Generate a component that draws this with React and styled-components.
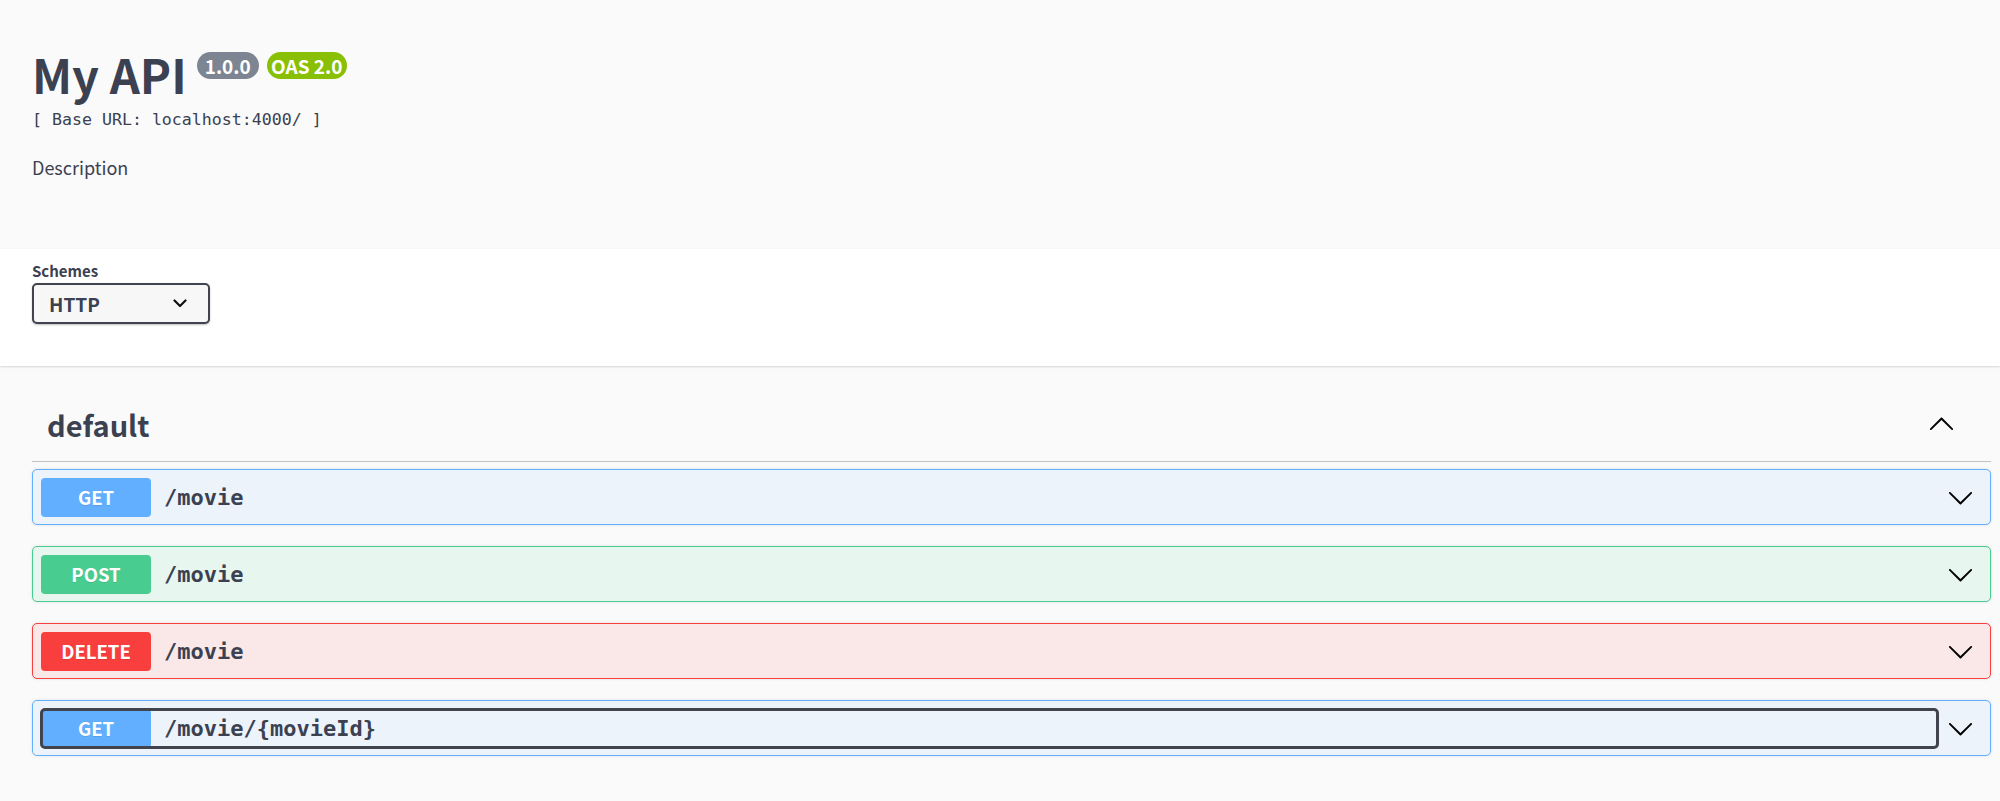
import React from "react";
import styled, { createGlobalStyle } from "styled-components";

const GlobalStyle = createGlobalStyle`
  html, body {
    margin: 0;
    padding: 0;
    background: #fafafa;
    font-family: "Noto Sans CJK KR", "Noto Sans", sans-serif;
    color: #3b4151;
  }
`;

const methods = {
  get: { main: "#61affe", bg: "#ecf3fb" },
  post: { main: "#49cc90", bg: "#e8f6f0" },
  delete: { main: "#f93e3e", bg: "#fae7e7" },
};

const operations = [
  { method: "get", path: "/movie" },
  { method: "post", path: "/movie" },
  { method: "delete", path: "/movie" },
  { method: "get", path: "/movie/{movieId}", focused: true },
];

const Arrow = ({ up, size = 27 }) => (
  <svg
    width={size}
    height={size}
    viewBox="0 0 20 20"
    style={up ? { transform: "rotate(180deg)" } : undefined}
  >
    <path
      fill="#000"
      d="M17.418 6.109c.272-.268.709-.268.979 0s.271.701 0 .969l-7.908 7.83c-.27.268-.707.268-.979 0l-7.908-7.83c-.27-.268-.27-.701 0-.969.271-.268.709-.268.979 0L10 13.25l7.418-7.141z"
    />
  </svg>
);

const SmallChevron = () => (
  <svg width="14" height="9" viewBox="0 0 14 9">
    <polyline
      points="1.5,1.5 7,7 12.5,1.5"
      fill="none"
      stroke="#111"
      strokeWidth="2.2"
      strokeLinecap="round"
      strokeLinejoin="round"
    />
  </svg>
);

const Page = styled.div`
  min-height: 801px;
`;

const Info = styled.div`
  padding: 44px 9px 0 32px;
  height: 249px;
  box-sizing: border-box;
`;

const TitleRow = styled.div`
  display: flex;
  align-items: flex-start;
`;

const Title = styled.h2`
  margin: 0;
  font-size: 47px;
  line-height: 60px;
  font-weight: 700;
  color: #3b4151;
`;

const Badges = styled.div`
  display: flex;
  gap: 8px;
  margin: 8px 0 0 10px;
`;

const Badge = styled.span`
  display: inline-flex;
  align-items: center;
  justify-content: center;
  width: ${(p) => p.$w}px;
  height: 27px;
  border-radius: 57px;
  background: ${(p) => p.$bg};
  color: #fff;
  font-size: 19px;
  font-weight: 700;
`;

const BaseUrl = styled.div`
  margin-top: 6px;
  font-family: "DejaVu Sans Mono", monospace;
  font-size: 16.6px;
  line-height: 20px;
  color: #3b4151;
`;

const Description = styled.div`
  margin-top: 24px;
  font-size: 18px;
  line-height: 26px;
`;

const SchemeContainer = styled.div`
  background: #fff;
  height: 117px;
  box-sizing: border-box;
  padding: 12px 9px 0 32px;
  box-shadow: 0 1px 2px 0 rgba(0, 0, 0, 0.15);
`;

const Label = styled.div`
  font-size: 15px;
  line-height: 20px;
  font-weight: 700;
  margin-bottom: 2px;
`;

const Select = styled.div`
  width: 178px;
  height: 41px;
  box-sizing: border-box;
  display: flex;
  align-items: center;
  justify-content: space-between;
  padding: 0 21px 0 15px;
  border: 2px solid #41444e;
  border-radius: 5px;
  background: #f7f7f7;
  box-shadow: 0 1px 2px 0 rgba(0, 0, 0, 0.25);
  font-size: 19px;
  font-weight: 700;
`;

const Section = styled.div`
  padding: 21px 9px 0 32px;
`;

const TagHeader = styled.div`
  display: flex;
  align-items: center;
  justify-content: space-between;
  padding: 13px 36px 13px 15px;
  border-bottom: 1px solid rgba(59, 65, 81, 0.3);
  margin-bottom: 7px;
`;

const TagName = styled.h3`
  margin: 0;
  font-size: 29px;
  line-height: 48px;
  font-weight: 700;
`;

const ArrowWrap = styled.span`
  display: flex;
`;

const Block = styled.div`
  display: flex;
  align-items: center;
  height: 56px;
  box-sizing: border-box;
  padding: 0 16px 0 7px;
  margin-bottom: 21px;
  border: 1px solid ${(p) => p.$main};
  border-radius: 5px;
  background: ${(p) => p.$bg};
  box-shadow: 0 0 3px rgba(0, 0, 0, 0.12);
`;

const Control = styled.div`
  position: relative;
  flex: 1;
  display: flex;
  align-items: center;
  height: 41px;
  padding: 0 1px;
  margin-right: 8px;

  ${(p) =>
    p.$focused &&
    `
    &::after {
      content: "";
      position: absolute;
      inset: 0;
      border: 3px solid #41444e;
      border-radius: 5px;
    }
  `}
`;

const Method = styled.span`
  width: 110px;
  height: 39px;
  display: flex;
  align-items: center;
  justify-content: center;
  flex-shrink: 0;
  border-radius: 4px;
  background: ${(p) => p.$main};
  color: #fff;
  font-size: 18.5px;
  font-weight: 700;
  text-shadow: 0 1px 0 rgba(0, 0, 0, 0.1);
`;

const Path = styled.span`
  margin-left: 13px;
  font-family: "DejaVu Sans Mono", monospace;
  font-size: 22px;
  font-weight: 700;
  color: #3b4151;
`;

export default function App() {
  return (
    <Page>
      <GlobalStyle />
      <Info>
        <TitleRow>
          <Title>My API</Title>
          <Badges>
            <Badge $bg="#7d8492" $w={62}>1.0.0</Badge>
            <Badge $bg="#89bf04" $w={80}>OAS 2.0</Badge>
          </Badges>
        </TitleRow>
        <BaseUrl>[ Base URL: localhost:4000/ ]</BaseUrl>
        <Description>Description</Description>
      </Info>

      <SchemeContainer>
        <Label>Schemes</Label>
        <Select>
          HTTP
          <SmallChevron />
        </Select>
      </SchemeContainer>

      <Section>
        <TagHeader>
          <TagName>default</TagName>
          <ArrowWrap>
            <Arrow up />
          </ArrowWrap>
        </TagHeader>
        {operations.map((op, i) => (
          <Block key={i} $main={methods[op.method].main} $bg={methods[op.method].bg}>
            <Control $focused={op.focused}>
              <Method $main={methods[op.method].main}>
                {op.method.toUpperCase()}
              </Method>
              <Path>{op.path}</Path>
            </Control>
            <Arrow />
          </Block>
        ))}
      </Section>
    </Page>
  );
}
